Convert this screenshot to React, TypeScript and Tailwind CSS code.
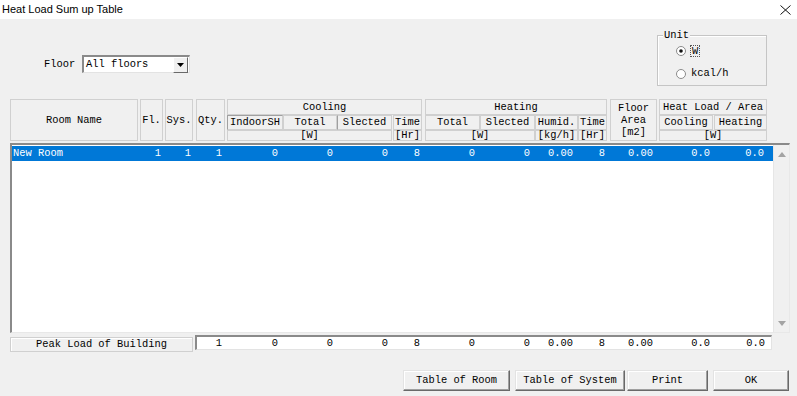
import React from "react";

const F = "font-['Liberation_Mono','Courier_New',monospace]";
const HC =
  "flex items-center justify-center border border-[#d0d0d0] bg-[#f0f0f0] whitespace-nowrap";

function Radio({ checked }: { checked: boolean }) {
  return (
    <svg width="10" height="10" viewBox="0 0 10 10" className="shrink-0">
      <circle cx="5" cy="5" r="4.5" fill="#fff" stroke="#8a8a8a" strokeWidth="1" />
      {checked && <circle cx="5" cy="5" r="1.8" fill="#111" />}
    </svg>
  );
}

function Btn({ label, w }: { label: string; w: string }) {
  return (
    <div
      className={`${w} h-[21px] flex items-center justify-center bg-[#f0f0f0] border border-t-[#e3e3e3] border-l-[#e3e3e3] border-r-[#696969] border-b-[#696969] shadow-[inset_-1px_-1px_#a0a0a0,inset_1px_1px_#ffffff] text-black`}
    >
      {label}
    </div>
  );
}

const dataCols =
  "grid grid-cols-[128px_25px_31px_31px_56px_54px_56px_32px_55px_55px_43px_32px_49px_55px_1fr]";

export default function App() {
  const vals = ["0", "0", "0", "8", "0", "0", "0.00", "8", "0.00", "0.0", "0.0"];
  const pads = [
    "pr-[5px]",
    "pr-[4px]",
    "pr-[5px]",
    "pr-[5px]",
    "pr-[5px]",
    "pr-[5px]",
    "pr-[5px]",
    "pr-[5px]",
    "pr-[6px]",
    "pr-[4px]",
    "pr-[9px]",
  ];
  return (
    <div
      className={`w-[797px] h-[396px] bg-[#f0f0f0] overflow-hidden text-[10.4px] leading-none text-black ${F}`}
    >
      {/* title bar */}
      <div className="h-[19px] bg-white flex items-center justify-between pl-[2px] pr-[6px]">
        <span className="font-['Liberation_Sans',sans-serif] text-[11px] text-black leading-none">
          Heat Load Sum up Table
        </span>
        <svg width="11" height="10" viewBox="0 0 11 10">
          <path d="M0.5 0.5 L10.5 9.5 M10.5 0.5 L0.5 9.5" stroke="#111" strokeWidth="1" fill="none" />
        </svg>
      </div>

      {/* controls */}
      <div className="h-[80px] flex">
        <div className="pt-[36px] pl-[44px] flex items-start">
          <div className="h-[18px] flex items-center w-[38px]">Floor</div>
          <div className="w-[108px] h-[18px] bg-white border-t-2 border-l-2 border-t-[#8a8a8a] border-l-[#8a8a8a] border-r border-b border-r-[#e3e3e3] border-b-[#e3e3e3] flex items-center">
            <span className="pl-[2px] flex-1">All floors</span>
            <div className="w-[15px] h-[16px] mr-px bg-[#f0f0f0] border border-t-[#ffffff] border-l-[#ffffff] border-r-[#696969] border-b-[#696969] flex items-center justify-center">
              <svg width="7" height="4" viewBox="0 0 7 4">
                <path d="M0 0 H7 L3.5 4 Z" fill="#000" />
              </svg>
            </div>
          </div>
        </div>
        <div className="ml-auto mr-[30px] mt-[16px] w-[110px] h-[51px] relative border border-[#c5c5c5] shadow-[inset_1px_1px_#ffffff]">
          <span className="absolute -top-[6px] left-[5px] px-px bg-[#f0f0f0]">Unit</span>
          <div className="pl-[18px] pt-[9px] flex flex-col gap-[12px]">
            <div className="flex items-center h-[11px]">
              <Radio checked />
              <span className="ml-[4px] px-px border border-dotted border-[#555] leading-[10px]">W</span>
            </div>
            <div className="flex items-center h-[11px]">
              <Radio checked={false} />
              <span className="ml-[5px]">kcal/h</span>
            </div>
          </div>
        </div>
      </div>

      {/* table */}
      <div className="pl-[10px]">
        <div className="grid grid-cols-[130px_25px_31px_31px_56px_54px_56px_32px_55px_55px_43px_32px_49px_55px_53px] grid-rows-[16px_15px_11px]">
          <div className={`${HC} col-start-1 row-start-1 row-span-3 mr-[2px]`}>Room Name</div>
          <div className={`${HC} col-start-2 row-start-1 row-span-3 mr-[2px]`}>Fl.</div>
          <div className={`${HC} col-start-3 row-start-1 row-span-3 mr-[3px]`}>Sys.</div>
          <div className={`${HC} col-start-4 row-start-1 row-span-3 mr-[2px]`}>Qty.</div>

          <div className={`${HC} col-start-5 col-span-4 row-start-1 mr-[3px]`}>Cooling</div>
          <div className={`${HC} col-start-5 row-start-2 border-t-[#a0a0a0] border-l-[#a0a0a0]`}>IndoorSH</div>
          <div className={`${HC} col-start-6 row-start-2`}>Total</div>
          <div className={`${HC} col-start-7 row-start-2 mr-px border-l-[#a0a0a0]`}>Slected</div>
          <div className={`${HC} col-start-8 row-start-2 mr-[3px]`}>Time</div>
          <div className={`${HC} col-start-5 col-span-3 row-start-3 mr-px`}>[W]</div>
          <div className={`${HC} col-start-8 row-start-3 mr-[3px]`}>[Hr]</div>

          <div className={`${HC} col-start-9 col-span-4 row-start-1 mr-[3px]`}>Heating</div>
          <div className={`${HC} col-start-9 row-start-2`}>Total</div>
          <div className={`${HC} col-start-10 row-start-2`}>Slected</div>
          <div className={`${HC} col-start-11 row-start-2`}>Humid.</div>
          <div className={`${HC} col-start-12 row-start-2 mr-[3px]`}>Time</div>
          <div className={`${HC} col-start-9 col-span-2 row-start-3`}>[W]</div>
          <div className={`${HC} col-start-11 row-start-3`}>[kg/h]</div>
          <div className={`${HC} col-start-12 row-start-3 mr-[3px]`}>[Hr]</div>

          <div className={`${HC} col-start-13 row-start-1 row-span-3 mr-[2px] flex-col leading-[12px]`}>
            <span>Floor</span>
            <span>Area</span>
            <span>[m2]</span>
          </div>

          <div className={`${HC} col-start-14 col-span-2 row-start-1`}>Heat Load / Area</div>
          <div className={`${HC} col-start-14 row-start-2 mr-px`}>Cooling</div>
          <div className={`${HC} col-start-15 row-start-2`}>Heating</div>
          <div className={`${HC} col-start-14 col-span-2 row-start-3`}>[W]</div>
        </div>

        {/* list */}
        <div className="mt-[2px] w-[780px] h-[190px] bg-white border-t-2 border-l-2 border-t-[#8a8a8a] border-l-[#8a8a8a] border-r border-b border-r-[#e8e8e8] border-b-[#e8e8e8] flex">
          <div className="flex-1 pt-px">
            <div className={`${dataCols} h-[15px] bg-[#0078d7] text-white items-center`}>
              <div className="pl-[1px]">New Room</div>
              <div className="text-right pr-[4px]">1</div>
              <div className="text-right pr-[5px]">1</div>
              <div className="text-right pr-[5px]">1</div>
              {vals.map((v, i) => (
                <div key={i} className={`text-right ${pads[i]}`}>
                  {v}
                </div>
              ))}
            </div>
          </div>
          <div className="w-[16px] bg-[#f0f0f0] border-l border-[#e6e6e6] flex flex-col items-center justify-between pt-[7px] pb-[6px]">
            <svg width="8" height="5" viewBox="0 0 8 5">
              <path d="M0 5 L4 0 L8 5 Z" fill="#a3a3a3" />
            </svg>
            <svg width="8" height="5" viewBox="0 0 8 5">
              <path d="M0 0 L8 0 L4 5 Z" fill="#a3a3a3" />
            </svg>
          </div>
        </div>

        {/* peak row */}
        <div className="flex items-start">
          <div className="mt-[4px] w-[183px] h-[15px] flex items-center justify-center border border-[#d0d0d0] bg-[#f0f0f0] shadow-[inset_1px_1px_#ffffff]">
            Peak Load of Building
          </div>
          <div className="mt-[2px] ml-[2px] w-[577px] h-[15px] bg-white border-t-2 border-l-2 border-t-[#8a8a8a] border-l-[#8a8a8a] border-r border-b border-r-[#e3e3e3] border-b-[#e3e3e3]">
            <div className="grid grid-cols-[30px_56px_54px_56px_32px_55px_55px_43px_32px_49px_55px_1fr] h-full items-center">
              <div className="text-right pr-[5px]">1</div>
              {vals.map((v, i) => (
                <div key={i} className={`text-right ${i === 10 ? "pr-[6px]" : pads[i]}`}>
                  {v}
                </div>
              ))}
            </div>
          </div>
        </div>
      </div>

      {/* buttons */}
      <div className="mt-[18px] flex justify-end pr-[8px]">
        <Btn label="Table of Room" w="w-[107px]" />
        <div className="w-[5px]" />
        <Btn label="Table of System" w="w-[110px]" />
        <div className="w-[2px]" />
        <Btn label="Print" w="w-[81px]" />
        <div className="w-[5px]" />
        <Btn label="OK" w="w-[76px]" />
      </div>
    </div>
  );
}
